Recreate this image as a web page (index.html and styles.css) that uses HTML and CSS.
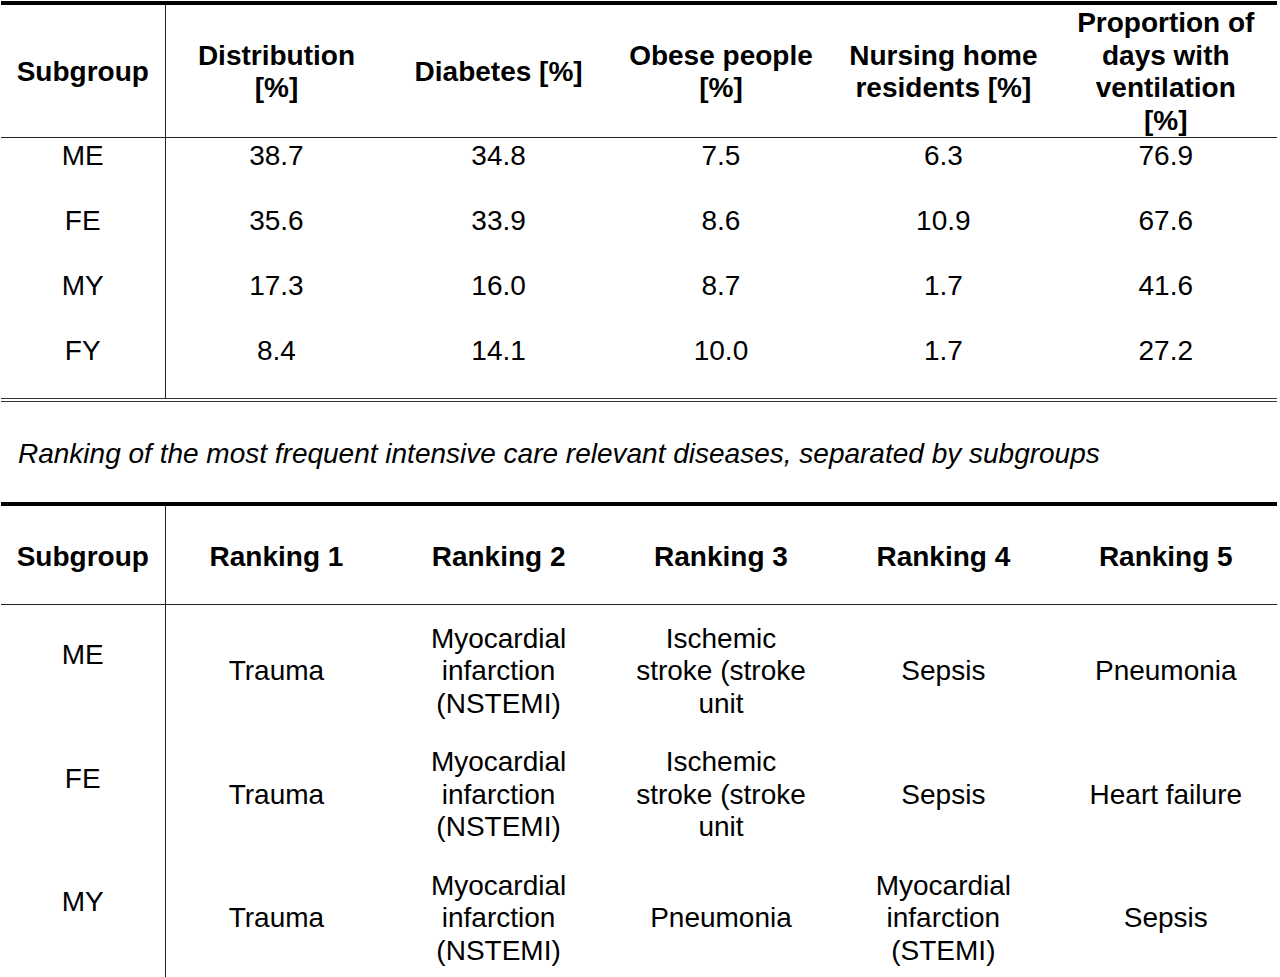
FILE: index.html
```html
<!DOCTYPE html>
<html lang="en">
<head>
    <meta charset="UTF-8">
    <title>Subgroups</title>
    <link rel="stylesheet" href="styles.css">
</head>
<body>

    <!-- Tabla de características por subgrupo -->
    <table class="data-table stats">
        <colgroup>
            <col class="col-sub">
            <col><col><col><col><col>
        </colgroup>
        <thead>
            <tr>
                <th>Subgroup</th>
                <th>Distribution<br>[%]</th>
                <th>Diabetes [%]</th>
                <th>Obese people<br>[%]</th>
                <th>Nursing home<br>residents [%]</th>
                <th>Proportion of<br>days with<br>ventilation<br>[%]</th>
            </tr>
        </thead>
        <tbody>
            <tr><td>ME</td><td>38.7</td><td>34.8</td><td>7.5</td><td>6.3</td><td>76.9</td></tr>
            <tr><td>FE</td><td>35.6</td><td>33.9</td><td>8.6</td><td>10.9</td><td>67.6</td></tr>
            <tr><td>MY</td><td>17.3</td><td>16.0</td><td>8.7</td><td>1.7</td><td>41.6</td></tr>
            <tr><td>FY</td><td>8.4</td><td>14.1</td><td>10.0</td><td>1.7</td><td>27.2</td></tr>
        </tbody>
    </table>

    <p class="caption">Ranking of the most frequent intensive care relevant diseases, separated by subgroups</p>

    <!-- Tabla de ranking -->
    <table class="data-table ranking">
        <colgroup>
            <col class="col-sub">
            <col><col><col><col><col>
        </colgroup>
        <thead>
            <tr>
                <th>Subgroup</th>
                <th>Ranking 1</th>
                <th>Ranking 2</th>
                <th>Ranking 3</th>
                <th>Ranking 4</th>
                <th>Ranking 5</th>
            </tr>
        </thead>
        <tbody>
            <tr>
                <td class="sub">ME</td>
                <td>Trauma</td>
                <td>Myocardial<br>infarction<br>(NSTEMI)</td>
                <td>Ischemic<br>stroke (stroke<br>unit</td>
                <td>Sepsis</td>
                <td>Pneumonia</td>
            </tr>
            <tr>
                <td class="sub">FE</td>
                <td>Trauma</td>
                <td>Myocardial<br>infarction<br>(NSTEMI)</td>
                <td>Ischemic<br>stroke (stroke<br>unit</td>
                <td>Sepsis</td>
                <td>Heart failure</td>
            </tr>
            <tr>
                <td class="sub">MY</td>
                <td>Trauma</td>
                <td>Myocardial<br>infarction<br>(NSTEMI)</td>
                <td>Pneumonia</td>
                <td>Myocardial<br>infarction<br>(STEMI)</td>
                <td>Sepsis</td>
            </tr>
        </tbody>
    </table>

</body>
</html>
```

FILE: styles.css
```css
/* Página */
body {
    margin: 0;
    padding: 1px 3px 0 1px;
    background: #fff;
    color: #000;
    font-family: "Liberation Sans", Arial, sans-serif;
    font-size: 28px;
    line-height: 32.5px;
}

/* Estilo general de las tablas */
.data-table {
    width: 1276px;
    border-collapse: collapse;
    table-layout: fixed;
    border-top: 4px solid #000;
}

.data-table .col-sub {
    width: 164px;
}

.data-table th,
.data-table td {
    padding: 0;
    text-align: center;
    vertical-align: middle;
    font-weight: normal;
}

.data-table th {
    font-weight: bold;
}

.data-table thead th {
    border-bottom: 1px solid #222;
}

/* Línea vertical tras la columna de subgrupo */
.data-table th:first-child,
.data-table td:first-child {
    border-right: 1px solid #222;
}

/* Primera tabla */
.stats thead th {
    height: 130px;
    padding-top: 2px;
}

.stats tbody td {
    height: 63px;
    vertical-align: top;
    padding-top: 2px;
}

.stats {
    border-bottom: 4px double #333;
}

/* Texto intermedio */
.caption {
    margin: 0;
    padding: 36px 0 31px 17px;
    font-style: italic;
}

/* Segunda tabla */
.ranking thead th {
    height: 92px;
    padding-top: 6px;
}

.ranking tbody td {
    padding: 18px 0 8px;
}

/* El subgrupo queda media línea más arriba */
.ranking tbody td.sub {
    padding-bottom: 40px;
}

.ranking tbody tr:last-child td {
    padding-bottom: 12px;
}

.ranking tbody tr:last-child td.sub {
    padding-bottom: 44px;
}
```
